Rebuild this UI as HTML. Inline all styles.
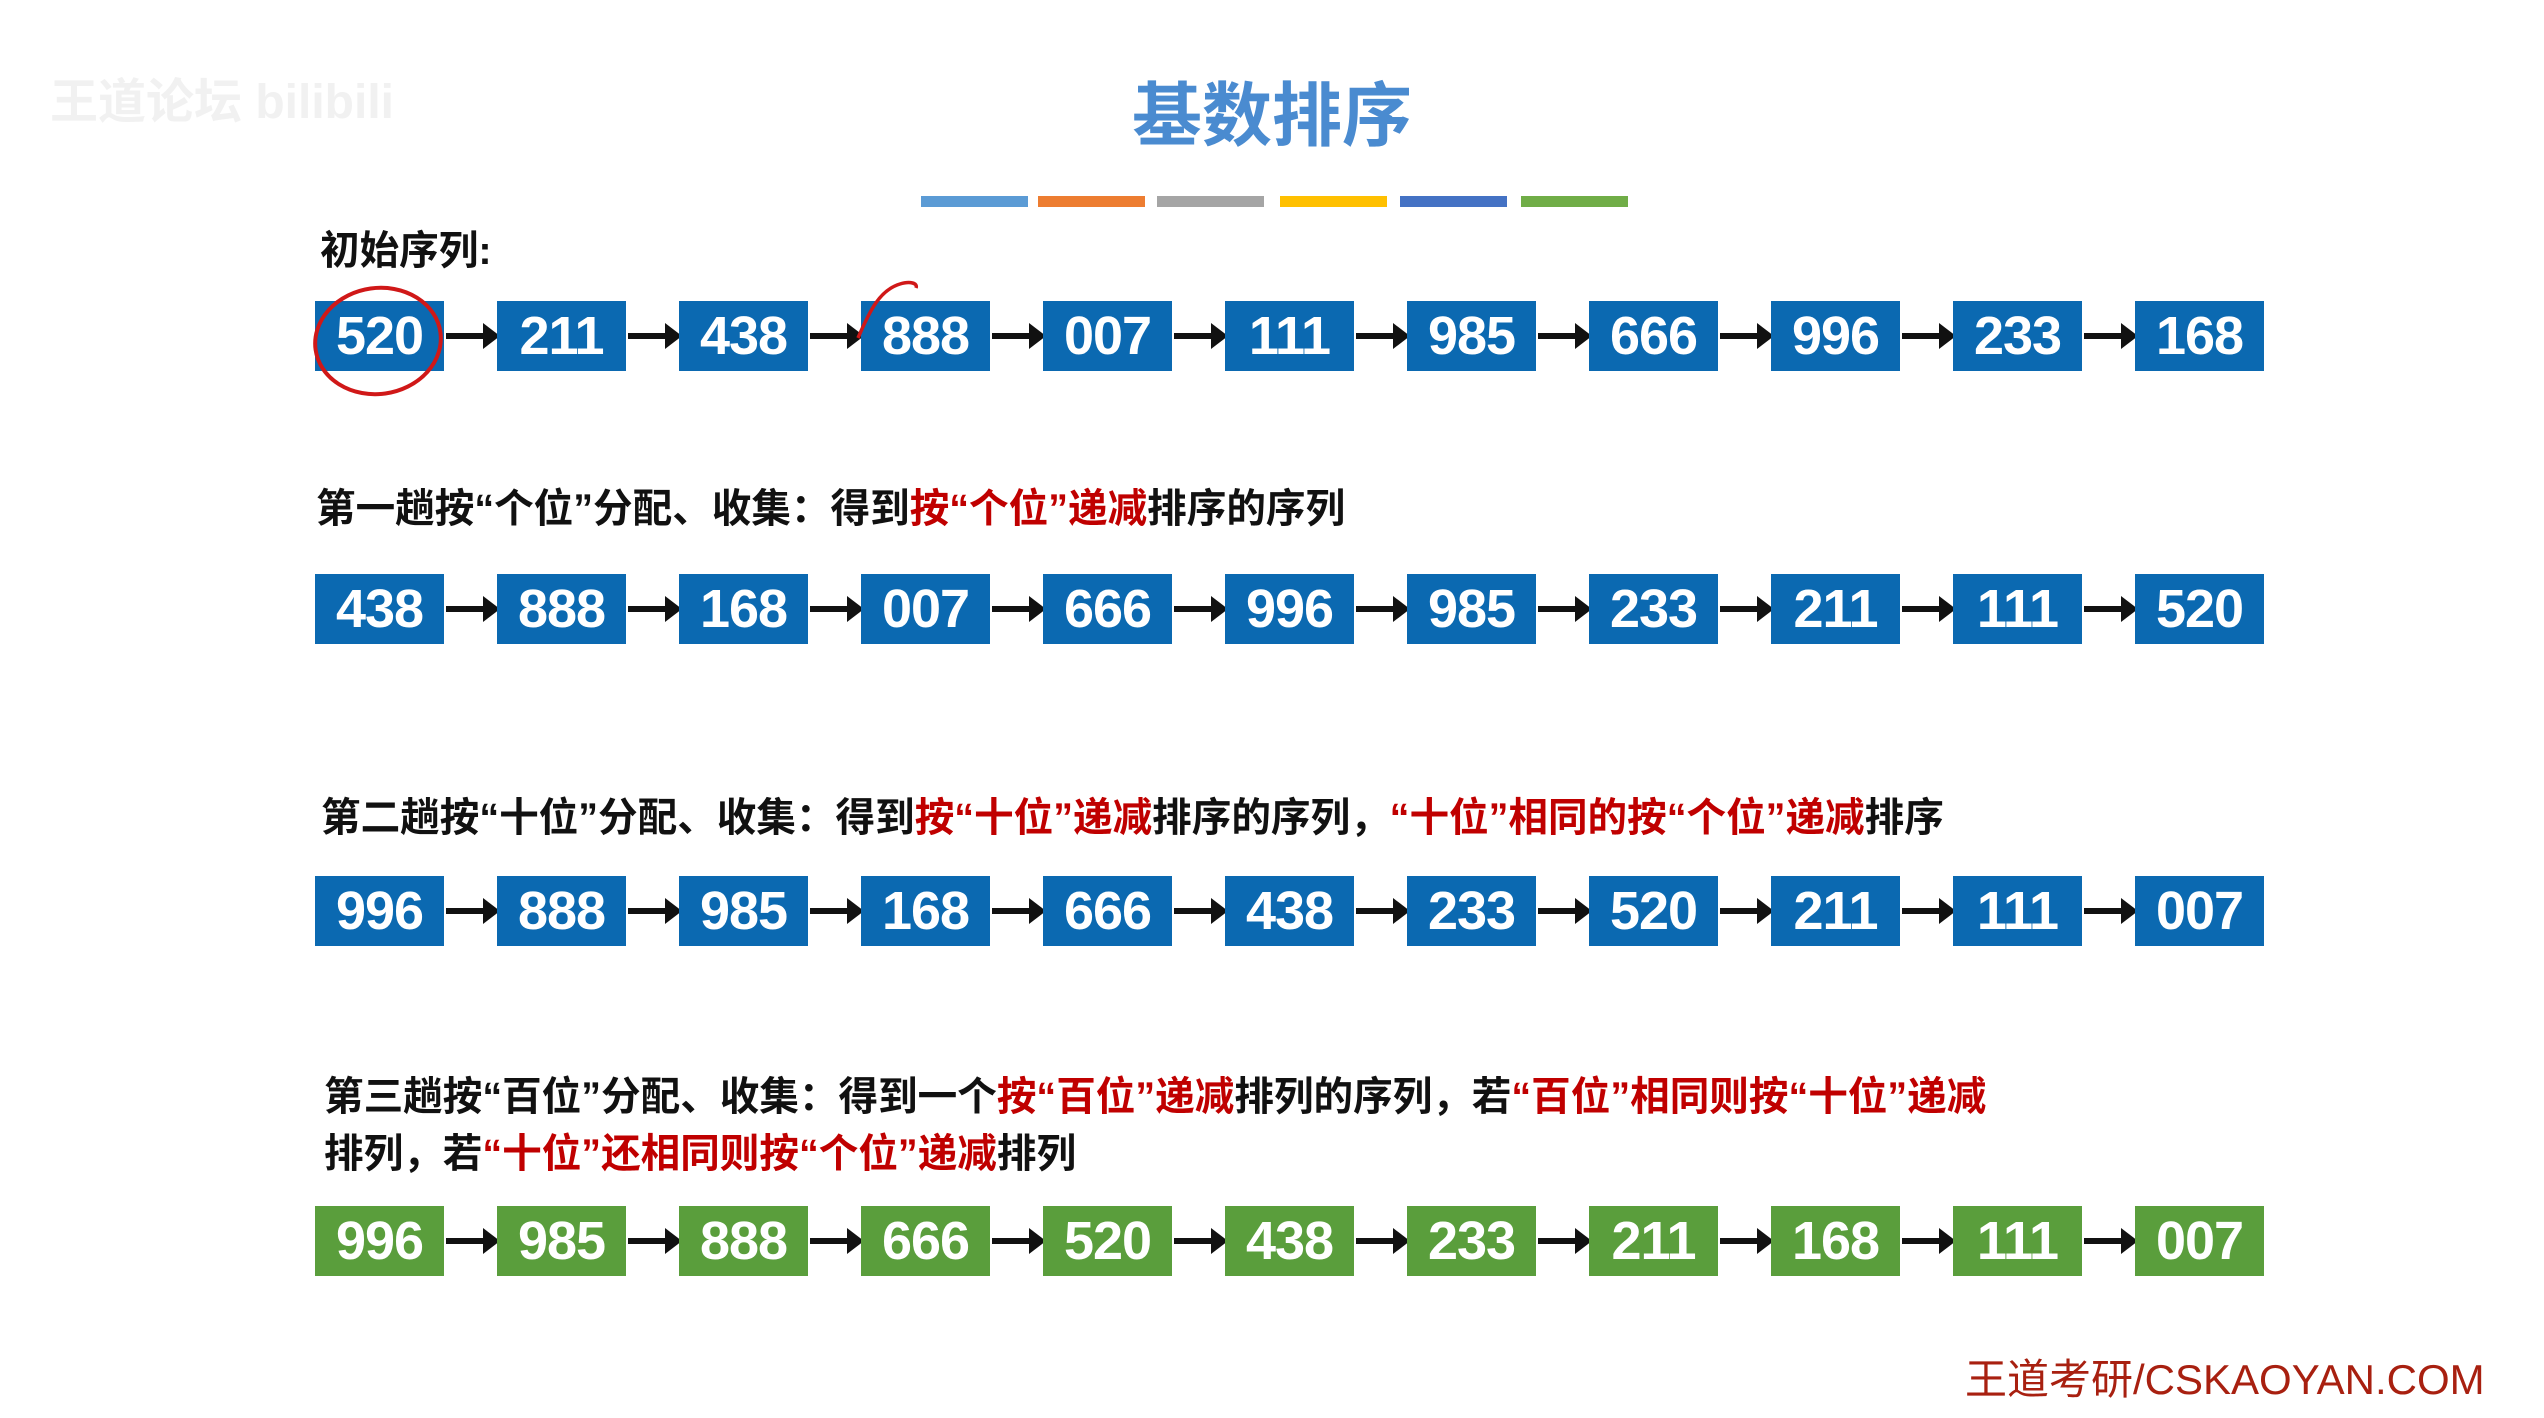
<!DOCTYPE html>
<html><head><meta charset="utf-8"><style>
body{margin:0;width:2544px;height:1418px;background:#fff;position:relative;overflow:hidden;font-family:"Liberation Sans","Noto Sans CJK SC",sans-serif}
.a{position:absolute}
.row{position:absolute;left:315px;height:70px;width:2000px}
.b{position:absolute;top:0;width:129px;height:70px;background:#0b69b1;color:#fff;font-size:54px;font-weight:bold;line-height:70px;text-align:center;letter-spacing:-1px}
.g .b{background:#5a9e3c}
.ar{position:absolute;top:32px;height:6px;background:#111;width:38px}
.ar:after{content:"";position:absolute;right:-16px;top:-10px;border-left:17px solid #111;border-top:13px solid transparent;border-bottom:13px solid transparent}
.t{position:absolute;font-size:39.6px;font-weight:bold;color:#111;white-space:nowrap;line-height:1}
.r{color:#c00000}
.bar{position:absolute;top:196px;height:11px;width:107px}
</style></head><body>
<div class="a" style="left:50px;top:62px;font-size:48px;color:#f1f1f1;font-weight:bold">王道论坛 bilibili</div>
<div class="a" style="left:1132px;top:76px;font-size:70px;font-weight:bold;color:#4a8bd0;font-family:'Noto Sans CJK SC',sans-serif;line-height:1">基数排序</div>
<div class="bar" style="left:921px;background:#5b9bd5"></div>
<div class="bar" style="left:1038px;background:#ed7d31"></div>
<div class="bar" style="left:1157px;background:#a5a5a5"></div>
<div class="bar" style="left:1280px;background:#ffc000"></div>
<div class="bar" style="left:1400px;background:#4472c4"></div>
<div class="bar" style="left:1521px;background:#70ad47"></div>
<div class="t" style="left:320px;top:232px">初始序列:</div>
<div class="t" style="left:316px;top:490px">第一趟按“个位”分配、收集：得到<span class="r">按“个位”递减</span>排序的序列</div>
<div class="t" style="left:321px;top:799px">第二趟按“十位”分配、收集：得到<span class="r">按“十位”递减</span>排序的序列，<span class="r">“十位”相同的按“个位”递减</span>排序</div>
<div class="t" style="left:324px;top:1078px">第三趟按“百位”分配、收集：得到一个<span class="r">按“百位”递减</span>排列的序列，若<span class="r">“百位”相同则按“十位”递减</span></div>
<div class="t" style="left:324px;top:1135px">排列，若<span class="r">“十位”还相同则按“个位”递减</span>排列</div>
<div id="rows"></div>
<div class="a" style="left:1965px;top:1359px;font-size:42px;color:#a82010;line-height:1;white-space:nowrap">王道考研/CSKAOYAN.COM</div>
<svg class="a" style="left:0;top:0" width="2544" height="1418">
<ellipse cx="378" cy="341" rx="63" ry="53" fill="none" stroke="#d01818" stroke-width="4" transform="rotate(-8 378 341)"/>
<path d="M858 338 C870 310 880 290 900 284 C910 281 918 283 916 288" fill="none" stroke="#d01818" stroke-width="3.5"/>
</svg>
<script>
var data=[[301,"520 211 438 888 007 111 985 666 996 233 168",""],[574,"438 888 168 007 666 996 985 233 211 111 520",""],[876,"996 888 985 168 666 438 233 520 211 111 007",""],[1206,"996 985 888 666 520 438 233 211 168 111 007","g"]];
var h="";
data.forEach(function(d){h+='<div class="row '+d[2]+'" style="top:'+d[0]+'px">';d[1].split(" ").forEach(function(n,i){h+='<div class="b" style="left:'+(i*182)+'px">'+n+'</div>';if(i<10)h+='<div class="ar" style="left:'+(i*182+131)+'px"></div>';});h+='</div>';});
document.getElementById("rows").innerHTML=h;
</script>
</body></html>
